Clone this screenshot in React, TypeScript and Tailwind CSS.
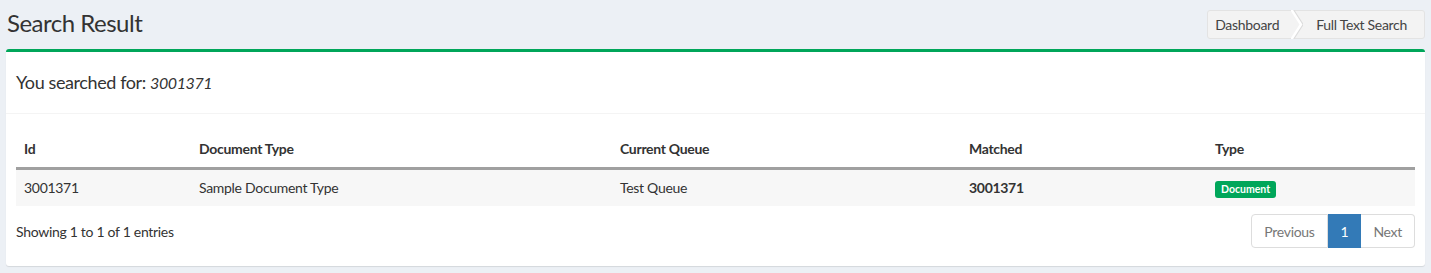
import React from "react"

const rows = [
  { id: "3001371", docType: "Sample Document Type", queue: "Test Queue", matched: "3001371", type: "Document" },
]

const Breadcrumb = () => (
  <ol className="flex h-[29px] items-stretch rounded-[3px] border border-[#e3e3e3] bg-[#f3f3f3] text-[14px] tracking-[-0.3px] text-[#444]">
    <li className="flex items-center pl-[7px] pr-[12px]">Dashboard</li>
    <li className="flex items-center">
      <svg width="12" height="29" viewBox="0 0 12 29">
        <path d="M1 -1 L11 14.5 L1 30" fill="none" stroke="#dcdcdc" strokeWidth="3" />
        <path d="M0 -1 L10 14.5 L0 30" fill="none" stroke="#ffffff" strokeWidth="2.5" />
      </svg>
    </li>
    <li className="flex items-center pl-[13px] pr-[17px]">Full Text Search</li>
  </ol>
)

const App = () => {
  return (
    <div className="min-h-screen bg-[#ecf0f5] px-[6px] pt-[10px] text-[#333]" style={{ fontFamily: "Lato, 'Liberation Sans', sans-serif" }}>
      <div className="flex items-start justify-between">
        <h1 className="pl-[1px] pt-[1px] text-[24px] leading-[24px] tracking-[-0.5px]">Search Result</h1>
        <Breadcrumb />
      </div>

      <div className="mt-[10px] rounded-[3px] border-t-[3px] border-[#00a65a] bg-white shadow-[0_1px_1px_rgba(0,0,0,0.1)]">
        <div className="flex h-[62px] items-center border-b border-[#f4f4f4] px-[10px] text-[18px] tracking-[-0.4px]">
          <span>You searched for:&nbsp;</span>
          <em className="text-[16px]">3001371</em>
        </div>

        <div className="px-[10px] pt-[17px] pb-[18px] text-[14px] tracking-[-0.3px]">
          <table className="w-full border-collapse">
            <thead>
              <tr className="border-b-[3px] border-[#a0a0a0] text-left">
                <th className="w-[175px] px-[8px] py-[8px] leading-[20px] font-bold">Id</th>
                <th className="w-[421px] px-[8px] py-[8px] leading-[20px] font-bold">Document Type</th>
                <th className="w-[349px] px-[8px] py-[8px] leading-[20px] font-bold">Current Queue</th>
                <th className="w-[246px] px-[8px] py-[8px] leading-[20px] font-bold">Matched</th>
                <th className="px-[8px] py-[8px] leading-[20px] font-bold">Type</th>
              </tr>
            </thead>
            <tbody>
              {rows.map((r) => (
                <tr key={r.id} className="bg-[#f7f7f7]">
                  <td className="px-[8px] py-[8px] leading-[20px]">{r.id}</td>
                  <td className="px-[8px] py-[8px] leading-[20px]">{r.docType}</td>
                  <td className="px-[8px] py-[8px] leading-[20px]">{r.queue}</td>
                  <td className="px-[8px] py-[8px] leading-[20px] font-bold">{r.matched}</td>
                  <td className="px-[8px] py-[8px] leading-[20px]">
                    <span className="inline-block rounded-[3px] bg-[#00a65a] px-[6px] py-[2px] text-[10.5px] font-bold leading-[13px] tracking-normal text-white">
                      {r.type}
                    </span>
                  </td>
                </tr>
              ))}
            </tbody>
          </table>

          <div className="mt-[8px] flex items-center justify-between">
            <div>Showing 1 to 1 of 1 entries</div>
            <ul className="flex h-[34px]">
              <li className="flex items-center rounded-l-[4px] border border-[#ddd] px-[12px] text-[#777]">Previous</li>
              <li className="flex items-center border border-[#337ab7] bg-[#337ab7] px-[12px] text-white">1</li>
              <li className="flex items-center rounded-r-[4px] border border-l-0 border-[#ddd] px-[12px] text-[#777]">Next</li>
            </ul>
          </div>
        </div>
      </div>
    </div>
  )
}

export default App
